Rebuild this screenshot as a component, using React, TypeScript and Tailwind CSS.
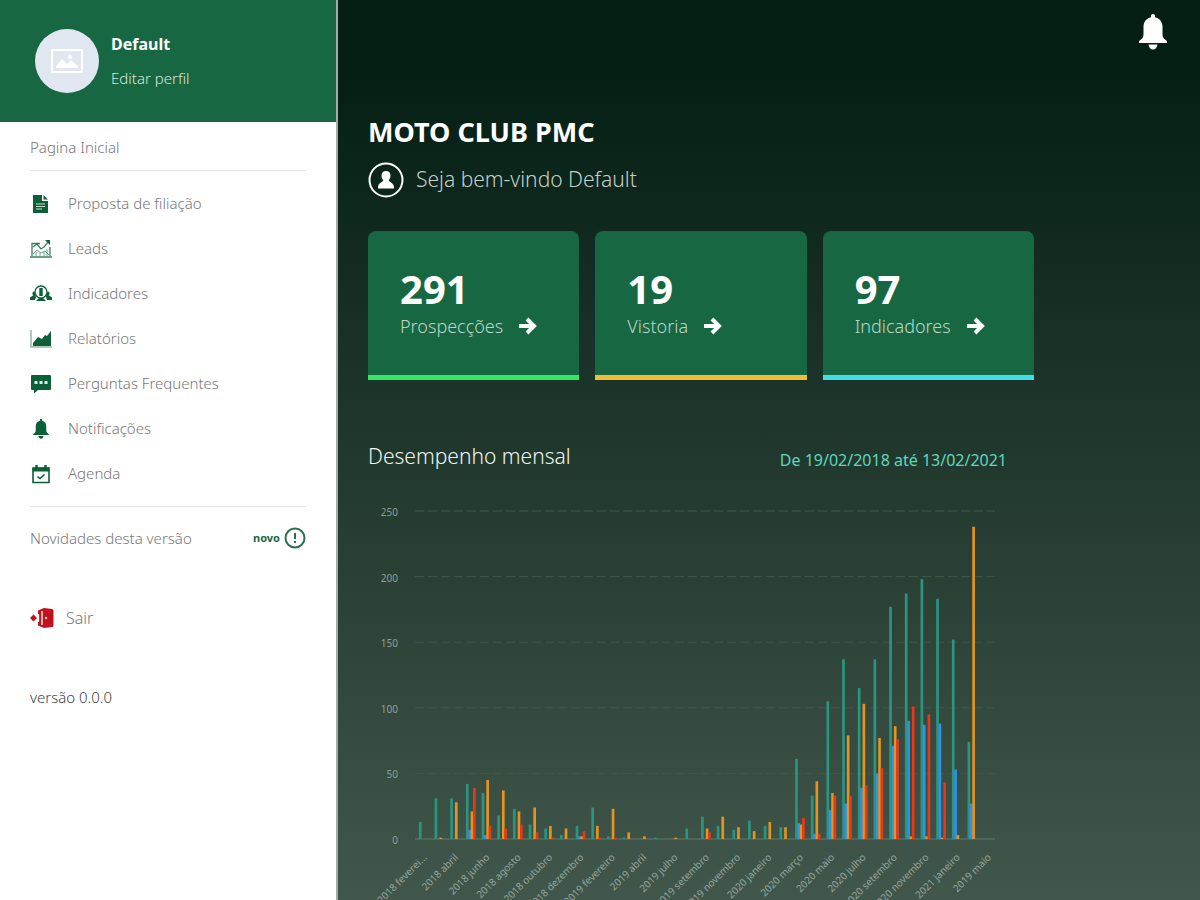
import type { ReactNode } from 'react'

type Month = [prospeccoes: number, vistorias: number, indicadores: number, leads: number]

const MONTHS: Month[] = [
    [13, 0, 0, 0], [31, 0, 1, 0], [31, 0, 28, 0], [42, 7, 21, 39], [35, 3, 45, 10],
    [18, 0, 37, 8], [23, 0, 21, 11], [11, 0, 24, 5], [8, 0, 10, 1], [3, 0, 8, 0],
    [10, 2, 2, 6], [24, 0, 10, 1], [2, 0, 23, 1], [1, 0, 5, 0], [0, 0, 2, 0],
    [1, 0, 0, 0], [0, 0, 1, 0], [8, 0, 0, 0], [17, 0, 8, 5], [10, 0, 17, 0],
    [7, 0, 9, 0], [14, 0, 6, 0], [10, 0, 13, 0], [9, 0, 9, 0], [61, 12, 11, 16],
    [33, 4, 44, 4], [105, 22, 35, 33], [137, 27, 79, 33], [115, 39, 103, 41], [137, 50, 77, 54],
    [177, 71, 86, 76], [187, 90, 2, 101], [198, 87, 2, 95], [183, 88, 1, 43], [152, 53, 3, 0],
    [74, 27, 238, 0], [0, 0, 0, 0],
]

const MONTH_LABELS = [
    '2018 feverei...', '2018 abril', '2018 junho', '2018 agosto', '2018 outubro', '2018 dezembro',
    '2019 fevereiro', '2019 abril', '2019 julho', '2019 setembro', '2019 novembro', '2020 janeiro',
    '2020 março', '2020 maio', '2020 julho', '2020 setembro', '2020 novembro', '2021 janeiro',
    '2019 maio',
]

const SERIES_COLORS = ['#2b9580', '#3391e6', '#e5941f', '#e5391b']

const CARDS = [
    { value: 291, label: 'Prospecções', border: 'border-[#32e668]' },
    { value: 19, label: 'Vistoria', border: 'border-[#f0bd34]' },
    { value: 97, label: 'Indicadores', border: 'border-[#3fdcea]' },
]

function BellIcon({ className }: { className: string }) {
    return (
        <svg viewBox="0 0 28 36" className={className} fill="currentColor" aria-hidden="true">
            <path d="M14 0c-1.300 0-2 .9-2 2v1.300C7.400 4.300 4.500 8 4.500 13v7.500c0 3-1.500 4.500-4.500 6.500v2h28v-2c-3-2-4.500-3.500-4.500-6.500V13c0-5-2.900-8.700-7.500-9.700V2c0-1.100-.7-2-2-2z" />
            <path d="M9.500 30.500h9c-.5 3-2.200 5-4.500 5s-4-2-4.500-5z" />
        </svg>
    )
}

function FileIcon() {
    return (
        <svg viewBox="0 0 22 20" className="h-5 w-[22px]" aria-hidden="true">
            <path d="M3 1h9v6h6v12H3z" fill="currentColor" />
            <path d="M13.500 1 18 5.500h-4.500z" fill="currentColor" />
            <path d="M6 10h9M6 12.500h9M6 15h6" stroke="#c9ddd2" strokeWidth="1.200" />
        </svg>
    )
}

function LeadsIcon() {
    return (
        <svg viewBox="0 0 22 20" className="h-5 w-[22px]" fill="none" stroke="currentColor" aria-hidden="true">
            <path d="M10 4.500H2V17M20 8v9M0 18h22" strokeWidth="1.300" opacity=".8" />
            <path d="m3 8 4-3 4 5 3-2 5-6" strokeWidth="1.300" opacity=".8" />
            <path d="m3 15 4-4 4 3 4-2 4 4" strokeWidth="1" opacity=".6" />
            <path d="M15 1h5v5z" fill="currentColor" strokeWidth="0" />
            <path d="M6 13v4M10 14v3M14 13v4M17 10v7" opacity=".6" />
        </svg>
    )
}

function PeopleIcon() {
    return (
        <svg viewBox="0 0 22 20" className="h-5 w-[22px]" fill="currentColor" aria-hidden="true">
            <circle cx="11" cy="8" r="6" fill="none" stroke="currentColor" strokeWidth="1.300" />
            <path d="M9.300 4h3.400v8H9.300z" />
            <path d="M4.500 7.500a2 2 0 0 0-1.200 3.700L0 13.500V16h5l1-3zM17.500 7.500a2 2 0 0 1 1.200 3.700l3.300 2.300V16h-5l-1-3z" />
            <path d="m6 17 3-3h4l3 3z" />
        </svg>
    )
}

function ReportIcon() {
    return (
        <svg viewBox="0 0 22 20" className="h-5 w-[22px]" aria-hidden="true">
            <path d="M1 1v17h21" fill="none" stroke="#9bb5a8" strokeWidth="1.500" />
            <path d="M3 17v-3l5-6 4 2 3-4 2 1 4-5v15z" fill="currentColor" />
        </svg>
    )
}

function ChatIcon() {
    return (
        <svg viewBox="0 0 22 20" className="h-5 w-[22px]" aria-hidden="true">
            <path d="M2 1h18q1 0 1 1v13q0 1-1 1H8l-4 3.500V16H2q-1 0-1-1V2q0-1 1-1z" fill="currentColor" />
            <path d="M4.500 7h3v3h-3zM9.500 7h3v3h-3zM14.500 7h3v3h-3z" fill="#e3efe8" />
        </svg>
    )
}

function CalendarIcon() {
    return (
        <svg viewBox="0 0 22 20" className="h-5 w-[22px]" fill="none" stroke="currentColor" aria-hidden="true">
            <path d="M3 4h16v14.500H3z" strokeWidth="1.600" />
            <path d="M3 4h16v3H3z" fill="currentColor" />
            <path d="M6.500 1v4M15.500 1v4" strokeWidth="2.400" />
            <path d="m7.500 12.500 2.500 2 4.500-4" strokeWidth="1.600" />
        </svg>
    )
}

function ExitIcon() {
    return (
        <svg viewBox="0 0 24 20" className="h-5 w-6" fill="#c1121c" aria-hidden="true">
            <path d="M8 2.500 14 0l8 1q1.500 0 1.500 1.500v15Q23.500 19 22 19l-8 1-6-2.500z" />
            <path d="M8.500 6v8M12 3v14" stroke="#fff" strokeWidth="1.300" />
            <path d="m0 10 3.500-3.500L7 10l-3.500 3.500z" />
            <circle cx="16" cy="10" r="1.300" fill="#f4b8bb" />
        </svg>
    )
}

function ArrowIcon() {
    return (
        <svg viewBox="0 0 18 18" className="size-[18px]" fill="none" stroke="currentColor" strokeWidth="4" aria-hidden="true">
            <path d="M0 9h15M8 2l7 7-7 7" />
        </svg>
    )
}

const MENU: { label: string; icon: ReactNode }[] = [
    { label: 'Proposta de filiação', icon: <FileIcon /> },
    { label: 'Leads', icon: <LeadsIcon /> },
    { label: 'Indicadores', icon: <PeopleIcon /> },
    { label: 'Relatórios', icon: <ReportIcon /> },
    { label: 'Perguntas Frequentes', icon: <ChatIcon /> },
    { label: 'Notificações', icon: <BellIcon className="h-5 w-[22px]" /> },
    { label: 'Agenda', icon: <CalendarIcon /> },
]

function Sidebar() {
    return (
        <aside className="flex w-[338px] shrink-0 flex-col border-r-2 border-[#a3ada8] bg-white text-[15px] font-light text-[#777777]">
            <div className="flex h-[122px] items-center gap-3 bg-[#186743] pl-[35px] text-white">
                <div className="flex size-16 items-center justify-center rounded-full bg-[#e1e7f1]">
                    <svg viewBox="0 0 32 24" className="h-6 w-8" aria-hidden="true">
                        <rect x="1" y="1" width="30" height="22" fill="none" stroke="#fff" strokeWidth="2" />
                        <path d="M5 19v-2l6-7 5 5 4-4 7 6v2z" fill="#fff" />
                        <circle cx="19" cy="8" r="2" fill="#fff" />
                    </svg>
                </div>
                <div className="flex flex-col gap-3.5">
                    <strong className="text-base leading-5 font-bold">Default</strong>
                    <a href="#perfil" className="leading-5 text-[#d5e5dc]">Editar perfil</a>
                </div>
            </div>

            <div className="flex flex-col px-[30px]">
                <a href="#inicio" className="border-b border-[#e2e2e2] pt-[15px] pb-[13px] leading-5">
                    Pagina Inicial
                </a>

                <nav className="flex flex-col border-b border-[#e2e2e2] py-2.5">
                    {MENU.map((item) => (
                        <a key={item.label} href="#menu" className="flex h-[45px] items-center gap-4">
                            <span className="text-[#0b6038]">{item.icon}</span>
                            {item.label}
                        </a>
                    ))}
                </nav>

                <a href="#novidades" className="flex items-center pt-5">
                    <span className="flex-1">Novidades desta versão</span>
                    <span className="mr-1 text-[11px] font-bold text-[#1a6845]">novo</span>
                    <svg viewBox="0 0 22 22" className="size-[22px]" fill="none" stroke="#2a7050" aria-hidden="true">
                        <circle cx="11" cy="11" r="9.500" strokeWidth="2" />
                        <path d="M11 6v6M11 14v2" strokeWidth="2" />
                    </svg>
                </a>

                <button className="mt-14 flex items-center gap-3 text-left text-base font-light">
                    <ExitIcon />
                    Sair
                </button>

                <span className="mt-14 text-[#404040]">versão 0.0.0</span>
            </div>
        </aside>
    )
}

function MonthlyChart() {
    const left = 47
    const step = 580 / MONTHS.length
    const base = 347
    const scale = 328 / 250
    const barWidth = step * 0.15

    return (
        <svg viewBox="0 0 666 420" className="w-full overflow-visible" role="img" aria-label="Desempenho mensal">
            {[250, 200, 150, 100, 50, 0].map((tick) => (
                <g key={tick}>
                    <text x="30" y={base - tick * scale + 5} textAnchor="end" className="fill-[#8d9f95] text-[10px]">
                        {tick}
                    </text>
                    <line
                        x1={left}
                        x2={left + 580}
                        y1={base - tick * scale}
                        y2={base - tick * scale}
                        stroke={tick === 0 ? '#65786e' : '#42584d'}
                        strokeDasharray={tick === 0 ? undefined : '9 4'}
                    />
                </g>
            ))}

            {MONTHS.map((month, i) =>
                month.map((value, s) => (
                    <rect
                        key={`${i}-${s}`}
                        x={left + i * step + step * 0.25 + s * barWidth}
                        y={base - value * scale}
                        width={barWidth + 0.3}
                        height={value * scale}
                        fill={SERIES_COLORS[s]}
                    />
                ))
            )}

            {MONTH_LABELS.map((label, i) => (
                <text
                    key={label}
                    textAnchor="end"
                    transform={`translate(${left + (i * 2 + 0.8) * step} 366) rotate(-45)`}
                    className="fill-[#93a59b] text-[10px]"
                >
                    {label}
                </text>
            ))}
        </svg>
    )
}

export default function App() {
    return (
        <div className="flex h-screen overflow-hidden font-['Noto_Sans',sans-serif]">
            <Sidebar />

            <main className="flex min-w-0 flex-1 flex-col overflow-hidden bg-linear-to-b from-[#051f15] from-8% to-[#42574c] px-[30px] text-white">
                <button aria-label="Notificações" className="mt-3.5 mr-[3px] self-end">
                    <BellIcon className="h-9 w-7" />
                </button>

                <div className="mt-16 w-full max-w-[666px]">
                    <h1 className="text-[27px] leading-9 font-bold">MOTO CLUB PMC</h1>

                    <div className="mt-3 flex items-center gap-3">
                        <svg viewBox="0 0 36 36" className="size-9" fill="#fff" aria-hidden="true">
                            <circle cx="18" cy="18" r="16.500" fill="none" stroke="#fff" strokeWidth="2" />
                            <path d="M18 9c-3 0-4.500 2-4.500 4.500 0 2 .8 3.500 1.800 4.500 0 2-5.300 3-5.300 7v1.500h16V25c0-4-5.300-5-5.300-7 1-1 1.800-2.500 1.800-4.500C22.500 11 21 9 18 9z" />
                        </svg>
                        <p className="text-[21px] font-light text-[#c4cec8]">Seja bem-vindo Default</p>
                    </div>

                    <div className="mt-[33px] grid grid-cols-3 gap-4">
                        {CARDS.map((card) => (
                            <a
                                key={card.label}
                                href="#detalhes"
                                className={`flex h-[149px] flex-col rounded-t-lg border-b-[5px] bg-[#186743] px-8 pt-[35px] ${card.border}`}
                            >
                                <strong className="text-[40px] leading-[46px]">{card.value}</strong>
                                <span className="flex items-center gap-4 text-lg leading-7 font-light text-[#b9d6c7]">
                                    {card.label}
                                    <span className="text-white"><ArrowIcon /></span>
                                </span>
                            </a>
                        ))}
                    </div>

                    <div className="mt-[60px] flex items-end justify-between pr-[27px]">
                        <h2 className="text-[21px] leading-8 font-light text-[#f0f4f2]">Desempenho mensal</h2>
                        <span className="text-base text-[#5fd6bd]">De 19/02/2018 até 13/02/2021</span>
                    </div>

                    <div className="mt-5">
                        <MonthlyChart />
                    </div>
                </div>
            </main>
        </div>
    )
}
